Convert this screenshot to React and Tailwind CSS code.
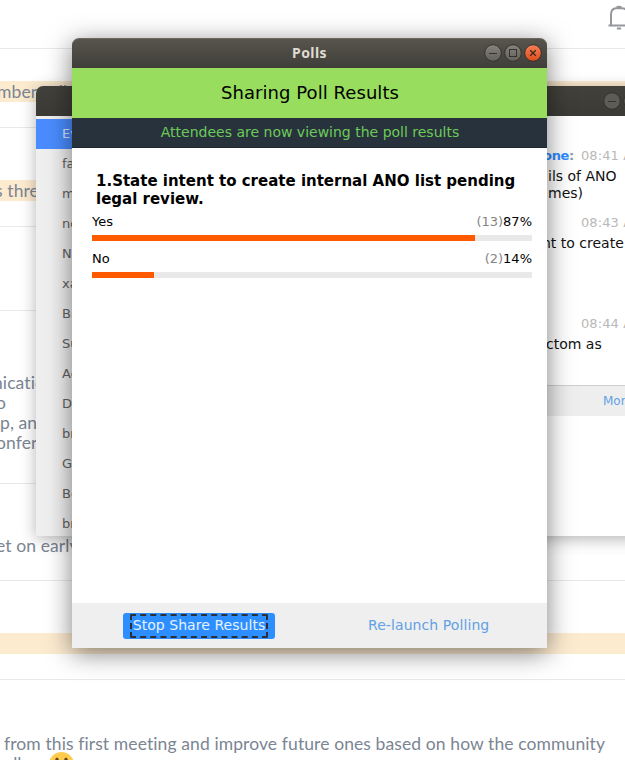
import React from 'react';

const participants = ['Everyone', 'factom', 'matt', 'now', 'Nic', 'xavier', 'Brian', 'Sun', 'Adam', 'David', 'brad', 'Gary', 'Ben', 'bruce'];

const results = [
  { label: 'Yes', votes: '(13)', share: '87%', width: 383 },
  { label: 'No', votes: '(2)', share: '14%', width: 62 },
];

function ForumPage() {
  return (
    <div className="flex h-[760px] w-[625px] flex-col overflow-hidden bg-white font-['Lato',sans-serif] text-[17.5px] leading-[20px] tracking-[0.1px] text-[#7b8593] whitespace-nowrap [font-variant-ligatures:none]">
      <header className="flex h-[49px] shrink-0 justify-end border-b border-[#e9e9ea]">
        <svg className="mt-[5px] -mr-[8px] h-[26px] w-[26px] shrink-0" viewBox="0 0 26 26" fill="none" stroke="#95979c" strokeWidth="2">
          <path d="M4 20V9.500Q4 3.500 9 3.200H15Q20.500 3.500 20.500 9.500V20M1.500 20.500H24" />
          <path d="M9.500 2.500Q12 .8 14.500 2.500M10 23.200Q12 24 14 23.200" />
        </svg>
      </header>
      <section className="h-[79px] shrink-0 border-b border-[#e9e9ea] pt-[32px]">
        <p className="flex h-[21px] items-center bg-[#fdebd0]"><span className="-ml-[3px]">mber calls</span></p>
      </section>
      <section className="h-[99px] shrink-0 border-b border-[#e9e9ea] pt-[52px]">
        <p className="flex h-[21px] w-[300px] items-center bg-[#fdebd0]"><span className="-ml-[5px]">s three</span></p>
      </section>
      <section className="h-[84px] shrink-0 border-b border-[#e9e9ea]" />
      <section className="h-[173px] shrink-0 border-b border-[#e9e9ea] pt-[62px]">
        <p className="-ml-[7px]">nication</p>
        <p className="-ml-[4px]">o</p>
        <p>p, and</p>
        <p className="-ml-[4px]">onference</p>
      </section>
      <section className="h-[97px] shrink-0 border-b border-[#e9e9ea] pt-[52px]">
        <p className="-ml-[4px]">et on early</p>
      </section>
      <section className="h-[99px] shrink-0 border-b border-[#e9e9ea] pt-[52px]">
        <div className="h-[21px] bg-[#fdebd0]" />
      </section>
      <section className="shrink-0 pt-[54px]">
        <p className="pl-[4px]">from this first meeting and improve future ones based on how the community</p>
        <div className="flex">
          <span className="-ml-[3px] w-[52px]">rolls out</span>
          <svg className="-mt-[2px] h-[25px] w-[25px]" viewBox="0 0 25 25">
            <circle cx="12.500" cy="12.500" r="12.500" fill="#ffcb4c" />
            <ellipse cx="8" cy="8.500" rx="1.800" ry="3" fill="#65471b" />
            <ellipse cx="17" cy="8.500" rx="1.800" ry="3" fill="#65471b" />
          </svg>
        </div>
      </section>
    </div>
  );
}

function ChatMessage({ sender, time, children, className }) {
  return (
    <div className={className}>
      <div className="flex h-[20px] items-center text-[13px]">
        <b className="w-[38px] tracking-[-0.3px] text-[#2d8cff]">{sender && <>one<span className="text-[#8a9aac]">:</span></>}</b>
        <span className="tracking-[0.1px] text-[#b8b8b8]">{time} AM</span>
      </div>
      <div className="text-[14px] leading-[17px] text-[#111]">{children}</div>
    </div>
  );
}

function ChatWindow() {
  return (
    <div className="absolute top-[86px] left-[36px] h-[450px] w-[640px] rounded-t-[7px] bg-white font-['DejaVu_Sans',sans-serif] whitespace-nowrap shadow-[0_3px_16px_rgba(0,0,0,0.3)]">
      <div className="flex h-[30px] items-center rounded-t-[7px] bg-gradient-to-b from-[#42413b] to-[#3b3a36] pl-[567px]">
        <div className="flex gap-[2px]">
          <WindowButton kind="min" dim />
          <WindowButton kind="max" dim />
        </div>
      </div>
      <div className="flex h-[420px]">
        <ul className="w-[300px] overflow-hidden bg-[#efefef] pt-[3px] text-[13px] text-[#636363]">
          {participants.map((name, i) => (
            <li key={name} className={i === 0 ? 'flex h-[30px] items-center bg-[#4a8cff] pl-[26px] text-[#dce8ff]' : 'flex h-[30px] items-center pl-[26px]'}>{name}</li>
          ))}
        </ul>
        <div className="w-[340px]">
          <div className="h-[269px] pt-[30px] pl-[207px]">
            <ChatMessage sender time="08:41" className="h-[67px]"><p className="pt-[2px] pl-[5px]">ils of ANO</p><p className="pl-[5px]">mes)</p></ChatMessage>
            <ChatMessage time="08:43" className="h-[101px]"><p className="-ml-px pt-[2px]">nt to create</p></ChatMessage>
            <ChatMessage time="08:44"><p className="pt-[2px] pl-[3px]">ctom as</p></ChatMessage>
          </div>
          <div className="flex h-[31px] items-center border-t border-[#cfcfcf] bg-[#eeeeee] pl-[267px] text-[12px] text-[#62a1e4]">More</div>
        </div>
      </div>
    </div>
  );
}

function WindowButton({ kind, dim }) {
  const fill = kind === 'close' ? 'url(#closeFill)' : dim ? '#5d5c57' : 'url(#greyFill)';
  return (
    <svg className="h-[18px] w-[18px]" viewBox="0 0 18 18" fill="none">
      <defs>
        <linearGradient id="closeFill" x2="0" y2="1"><stop stopColor="#f58058" /><stop offset="1" stopColor="#e04c1b" /></linearGradient>
        <linearGradient id="greyFill" x2="0" y2="1"><stop stopColor="#85837b" /><stop offset="1" stopColor="#62615a" /></linearGradient>
      </defs>
      <circle cx="9" cy="9" r="8.300" fill={fill} stroke="#34332f" />
      {kind === 'min' && <path d="M5 9.500H13" stroke="#34332f" />}
      {kind === 'max' && <rect x="5.500" y="5.500" width="7" height="7" stroke="#34332f" />}
      {kind === 'close' && <path d="M6.200 6.200L11.800 11.800M11.800 6.200L6.200 11.800" stroke="#3a2a1c" strokeWidth="1.300" />}
    </svg>
  );
}

function PollWindow() {
  return (
    <div className="absolute top-[38px] left-[72px] flex h-[610px] w-[475px] flex-col rounded-t-[7px] bg-white font-['DejaVu_Sans',sans-serif] whitespace-nowrap shadow-[0_5px_26px_rgba(0,0,0,0.5)]">
      <div className="grid h-[30px] grid-cols-[1fr_auto_1fr] items-center rounded-t-[7px] border-t border-[#6b6960] bg-gradient-to-b from-[#57554c] to-[#3f3e39] pr-[5px] pb-px">
        <span />
        <h1 className="pl-[5px] font-['Noto_Sans',sans-serif] text-[14px] leading-[18px] font-bold tracking-[0.4px] text-[#dfdbd2]">Polls</h1>
        <div className="flex justify-end gap-[2px]">
          <WindowButton kind="min" />
          <WindowButton kind="max" />
          <WindowButton kind="close" />
        </div>
      </div>
      <div className="flex h-[50px] items-center justify-center bg-[#98dd5d] pb-[2px] pl-px text-[18px] tracking-[0.06px] text-black">Sharing Poll Results</div>
      <div className="flex h-[30px] items-center justify-center border-b border-[#1f2633] bg-[#28323d] pl-px text-[14px] text-[#6ccb57]">Attendees are now viewing the poll results</div>
      <main className="flex-1 px-[20px] pt-[24px] pr-[15px]">
        <h2 className="mb-px pl-[4px] text-[15px] leading-[18px] font-bold text-black">1.State intent to create internal ANO list pending<br />legal review.</h2>
        {results.map((r) => (
          <div key={r.label} className="h-[37px] w-[440px] pt-[3px]">
            <div className="flex h-[20px] items-center justify-between text-[13px] text-black">
              <span>{r.label}</span>
              <span><span className="text-[#858585]">{r.votes}</span>{r.share}</span>
            </div>
            <div className="mt-[3px] h-[6px] bg-[#e9e9e9]">
              <div className="h-full bg-[#ff5a00]" style={{ width: r.width }} />
            </div>
          </div>
        ))}
      </main>
      <footer className="flex h-[45px] items-center bg-[#efefef] pl-[51px] text-[14px]">
        <button className="flex h-[26px] w-[152px] items-center justify-center rounded-[3px] bg-[#2d8fff] text-[#e6f2ff]">
          <span className="flex h-[24px] w-[138px] items-center justify-center rounded-[2px] border-2 border-dashed border-[#2c3036] tracking-[0.05px]">Stop Share Results</span>
        </button>
        <button className="ml-[93px] tracking-[0.08px] text-[#62a1e4]">Re-launch Polling</button>
      </footer>
    </div>
  );
}

export default function App() {
  return (
    <div className="relative h-[760px] w-[625px] overflow-hidden">
      <ForumPage />
      <ChatWindow />
      <PollWindow />
    </div>
  );
}
